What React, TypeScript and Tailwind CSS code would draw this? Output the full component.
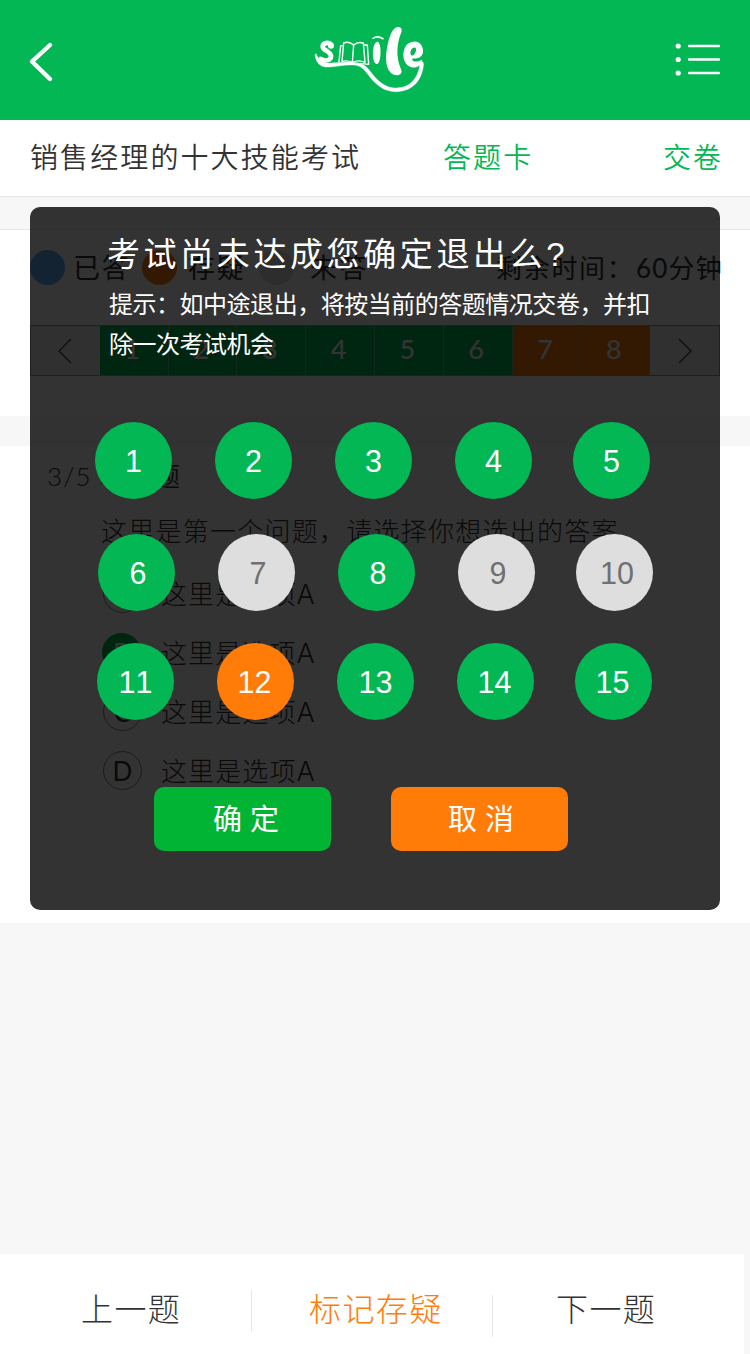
import React from "react";

type Status = "answered" | "doubt" | "empty";

const CJK = "font-['Liberation_Sans','Noto_Sans_CJK_SC',sans-serif]";
const SOFT = "font-['Lato','Noto_Sans_CJK_SC',sans-serif]";

const circleStyle: Record<Status, string> = {
  answered: "bg-[#03b755] text-white",
  doubt: "bg-[#ff7c08] text-white",
  empty: "bg-[#dedede] text-[#707070]",
};

const rows: { className: string; items: { n: number; s: Status; pad: string }[] }[] = [
  {
    className: "pl-[65px]",
    items: [
      { n: 1, s: "answered", pad: "" },
      { n: 2, s: "answered", pad: "" },
      { n: 3, s: "answered", pad: "" },
      { n: 4, s: "answered", pad: "" },
      { n: 5, s: "answered", pad: "" },
    ],
  },
  {
    className: "pl-[68px] mt-[34.5px]",
    items: [
      { n: 6, s: "answered", pad: "pl-[3px]" },
      { n: 7, s: "empty", pad: "pl-[3px]" },
      { n: 8, s: "answered", pad: "pl-[3px]" },
      { n: 9, s: "empty", pad: "pl-[3px]" },
      { n: 10, s: "empty", pad: "pl-[5px]" },
    ],
  },
  {
    className: "pl-[67px] mt-[32.5px]",
    items: [
      { n: 11, s: "answered", pad: "" },
      { n: 12, s: "doubt", pad: "pr-[2px]" },
      { n: 13, s: "answered", pad: "" },
      { n: 14, s: "answered", pad: "pr-[2px]" },
      { n: 15, s: "answered", pad: "pr-[2px]" },
    ],
  },
];

function Logo() {
  return (
    <svg viewBox="0 0 420 270" className="h-[90px] w-[140px]" fill="none" stroke="#fff" strokeLinecap="round" strokeLinejoin="round">
      <path d="M93 88C86 81 68 83 68 95C68 107 94 109 93 125C92 137 73 140 62 132" strokeWidth="14" />
      <circle cx="93" cy="92" r="9" fill="#fff" stroke="none" />
      <path d="M45 118C46 139 58 154 76 156C104 158 138 146 168 151C192 156 200 176 218 196C238 218 260 230 287 230C330 230 366 204 371 146L360 148C352 198 324 219 287 219C264 219 246 208 228 190C211 172 202 148 172 143C140 138 104 146 80 144C66 142 56 134 49 118Z" fill="#fff" strokeWidth="1" />
      <path d="M122 92L117 140M122 92L129 91M131 84L126 139M131 84C141 80 153 83 161 90L157 142M126 139C137 136 148 138 157 142M161 90C170 82 181 81 190 84L195 142M193 90L202 90L206 148L180 145M157 142C170 136 184 137 195 142" strokeWidth="4.2" />
      <path d="M219 70C228 64 239 65 249 71" strokeWidth="5" />
      <path d="M231 80C222 83 218 103 219 122C220 139 226 148 232 147C240 144 243 119 241 99C240 87 236 79 231 80Z" fill="#fff" stroke="none" />
      <path d="M292 36C301 34 308 41 304 52C291 84 286 124 303 163C308 174 301 181 290 181C262 179 253 142 261 99C267 68 276 39 292 36Z" fill="#fff" stroke="none" />
      <path fillRule="evenodd" d="M340 80C358 77 371 93 369 112C366 130 349 131 336 131C338 142 350 142 366 134C368 138 366 145 360 150C350 159 337 160 327 154C312 145 306 122 313 102C318 88 328 81 340 80ZM346 98C335 96 327 113 334 121C342 126 353 103 346 98Z" fill="#fff" stroke="none" />
      <path d="M344 152L367 144" strokeWidth="7" />
    </svg>
  );
}

function Option({ letter, top, active }: { letter: string; top: string; active?: boolean }) {
  return (
    <div className={`flex h-[39px] items-center ${top}`}>
      <span
        className={`flex h-[39px] w-[39px] items-center justify-center rounded-full text-[26px] leading-none ${
          active ? "-ml-px mr-px bg-[#03b755] text-white" : "border border-[#888] text-[#333]"
        }`}
      >
        {letter}
      </span>
      <span className="ml-[19px] pt-[2px] text-[26px] leading-none font-light tracking-[1.1px] text-[#333]">
        这里是选项<span className="font-['Inter'] text-[27px]">A</span>
      </span>
    </div>
  );
}

function Dialog() {
  return (
    <div className={`absolute top-[207px] left-[30px] h-[703px] w-[690px] rounded-[10px] bg-black/80 text-white ${CJK}`}>
      <h2 className="mt-[28px] ml-[77px] h-[40px] text-[33px] leading-[40px] font-normal tracking-[3.6px] whitespace-nowrap">
        考试尚未达成您确定退出么?
      </h2>
      <p className="mt-[10px] ml-[79px] text-[24px] leading-[40px] tracking-[-0.48px] whitespace-nowrap">
        提示：如中途退出，将按当前的答题情况交卷，并扣
        <br />
        除一次考试机会
      </p>
      <div className="mt-[57px]">
        {rows.map((row) => (
          <div key={row.items[0].n} className={`flex gap-[43px] ${row.className}`}>
            {row.items.map((item) => (
              <button
                key={item.n}
                className={`flex h-[77px] w-[77px] items-center justify-center rounded-full pt-[2px] text-[30.5px] leading-none last:-ml-[2px] [font-kerning:none] ${circleStyle[item.s]} ${item.pad}`}
              >
                {item.n}
              </button>
            ))}
          </div>
        ))}
      </div>
      <div className="mt-[67px] ml-[124px] flex gap-[60px]">
        <button className="h-[64px] w-[177px] rounded-[10px] bg-[#02b433] pt-[2px] pl-[7px] text-[29px] leading-[62px]">确 定</button>
        <button className="h-[64px] w-[177px] rounded-[10px] bg-[#ff7c08] pt-[2px] pl-[3px] text-[29px] leading-[62px]">取 消</button>
      </div>
    </div>
  );
}

export default function App() {
  return (
    <div className={`relative flex h-[1354px] w-[750px] flex-col overflow-hidden bg-[#f7f7f7] text-[#333] ${SOFT}`}>
      <header className="flex h-[120px] shrink-0 items-start bg-[#03b755]">
        <svg viewBox="0 0 100 90" className="mt-5 h-[90px] w-[100px]" fill="none" stroke="#fff" strokeWidth="4.4" strokeLinecap="round" strokeLinejoin="round">
          <path d="M50 25L32 41.500L50 59" />
        </svg>
        <div className="mt-[15px] ml-[200px]">
          <Logo />
        </div>
        <svg viewBox="0 0 100 90" className="mt-5 ml-[210px] h-[90px] w-[100px]" fill="#fff">
          <circle cx="28.200" cy="26" r="2.600" />
          <circle cx="28.200" cy="39.500" r="2.600" />
          <circle cx="28.200" cy="53" r="2.600" />
          <rect x="38" y="24.700" width="32" height="2.600" rx="1" />
          <rect x="38" y="38.200" width="32" height="2.600" rx="1" />
          <rect x="38" y="51.700" width="32" height="2.600" rx="1" />
        </svg>
      </header>

      <div className="flex h-[77px] shrink-0 border-b border-[#e8e8e8] bg-white text-[28px] leading-[75px] font-[350] tracking-[2.1px] whitespace-nowrap">
        <span className="ml-[30px] w-[413px]">销售经理的十大技能考试</span>
        <span className="w-[220px] text-[#03b755]">答题卡</span>
        <span className="text-[#03b755]">交卷</span>
      </div>

      <section className="mt-[32px] h-[187px] shrink-0 border-t border-[#e8e8e8] bg-white">
        <div className="mt-[20px] flex h-[35px] items-center pl-[30px] text-[27px] leading-none tracking-[1.7px] whitespace-nowrap">
          <i className="h-[35px] w-[35px] rounded-full bg-[#65aef8]" />
          <span className="ml-[8px] w-[69px]">已答</span>
          <i className="h-[35px] w-[35px] rounded-full bg-[#ff7c08]" />
          <span className="ml-[11px] w-[71px]">存疑</span>
          <i className="h-[35px] w-[35px] rounded-full bg-[#dedede]" />
          <span className="ml-[16px] w-[186px] tracking-[2.5px]">未答</span>
          <span className="w-[140px] text-[26px]">剩余时间：</span>
          <span className="text-[26px] tracking-[1.2px]">60分钟</span>
        </div>
        <div className="mt-[40px] ml-[30px] grid h-[51px] w-[690px] grid-cols-10 border border-[#999] text-[27px] leading-[45px] font-medium text-white">
          <span className="flex items-center justify-center bg-[#f0f0f0]">
            <svg viewBox="0 0 16 26" className="h-[26px] w-[16px]" fill="none" stroke="#555" strokeWidth="1.500">
              <path d="M14 1L2 13L14 25" />
            </svg>
          </span>
          {[1, 2, 3, 4, 5, 6].map((n) => (
            <span key={n} className="border-r border-[#ddd]/40 bg-[#03b755] pr-[3px] text-center">{n}</span>
          ))}
          {[7, 8].map((n) => (
            <span key={n} className="border-r border-[#aaa]/40 bg-[#ff7c08] pr-[3px] text-center">{n}</span>
          ))}
          <span className="flex items-center justify-center bg-[#f0f0f0]">
            <svg viewBox="0 0 16 26" className="h-[26px] w-[16px]" fill="none" stroke="#555" strokeWidth="1.500">
              <path d="M2 1L14 13L2 25" />
            </svg>
          </span>
        </div>
      </section>

      <section className="mt-[30px] h-[477px] shrink-0 bg-white">
        <div className="mt-[16px] ml-[47px] h-[28px] text-[26px] leading-[28px] font-[350] tracking-[1.1px] whitespace-nowrap">3/5 单选题</div>
        <div className="mt-[27px] ml-[101px] h-[28px] text-[26px] leading-[28px] font-light tracking-[1.250px] whitespace-nowrap">
          这里是第一个问题，请选择你想选出的答案
        </div>
        <div className="ml-[103px]">
          <Option letter="A" top="mt-[29px]" />
          <Option letter="B" top="mt-[20px]" active />
          <Option letter="C" top="mt-[20px]" />
          <Option letter="D" top="mt-[20px]" />
        </div>
      </section>

      <footer className="mt-auto flex h-[100px] w-[744px] shrink-0 bg-white text-[32px] leading-[109px] font-light tracking-[1.400px] whitespace-nowrap">
        <span className="w-[251px] pl-[81px]">上一题</span>
        <i className="mt-[36px] h-[42px] w-px bg-[#e8e8e8]" />
        <span className="w-[240px] pl-[57px] text-[#ff7c08]">标记存疑</span>
        <i className="mt-[41px] h-[42px] w-px bg-[#e8e8e8]" />
        <span className="pl-[63px]">下一题</span>
      </footer>

      <Dialog />
    </div>
  );
}
